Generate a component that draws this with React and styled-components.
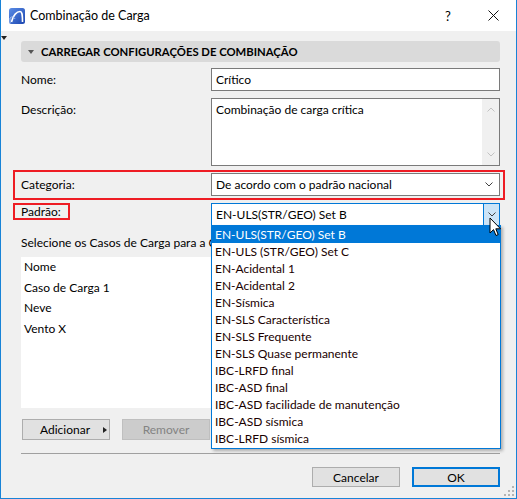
import React from 'react';
import styled, { createGlobalStyle } from 'styled-components';

const Global = createGlobalStyle`
  html, body { margin: 0; padding: 0; background: #fff; }
  body { font-family: Lato, "Noto Sans", sans-serif; font-size: 12px; color: #000; }
  * { box-sizing: border-box; }
`;

const Window = styled.div`
  position: relative;
  width: 517px;
  height: 499px;
  border: 1px solid #1883d7;
  border-top: none;
  background: #f0f0f0;
  display: flex;
  flex-direction: column;
  overflow: hidden;
`;

const TitleBar = styled.div`
  height: 31px;
  flex: none;
  background: #fff;
  display: flex;
  align-items: center;
  padding-left: 8px;
`;

const TitleText = styled.span`
  margin-left: 5px;
  font-size: 12.5px;
`;

const TitleButton = styled.div`
  width: ${(p) => p.$w}px;
  height: 31px;
  display: flex;
  align-items: center;
  justify-content: center;
  font-size: 13px;
  margin-left: ${(p) => (p.$first ? 'auto' : '0')};
`;

const Body = styled.div`
  flex: 1;
  display: flex;
  flex-direction: column;
  padding: 10px 16px 0 20px;
`;

const EdgeMarker = styled.div`
  position: absolute;
  left: 0;
  top: 36px;
  width: 0;
  height: 0;
  border-left: 3px solid transparent;
  border-right: 3px solid transparent;
  border-top: 4px solid #222;
`;

const SectionHeader = styled.div`
  height: 21px;
  background: #dadada;
  border-radius: 3px;
  display: flex;
  align-items: center;
  padding-left: 7px;
  font-weight: 700;
  font-size: 11.3px;
`;

const DownTriangle = styled.span`
  width: 0;
  height: 0;
  border-left: 3px solid transparent;
  border-right: 3px solid transparent;
  border-top: 4px solid #555;
  margin-right: 7px;
`;

const Row = styled.div`
  display: flex;
  align-items: ${(p) => (p.$top ? 'flex-start' : 'center')};
  margin-top: ${(p) => p.$mt || 0}px;
`;

const LabelCell = styled.div`
  width: 190px;
  flex: none;
  line-height: ${(p) => (p.$lh ? `${p.$lh}px` : 'normal')};
`;

const HighlightRow = styled(Row)`
  margin-left: -8px;
  margin-right: -5px;
  border: 2px solid #ee1c24;
  padding: 1px 3px 2px 6px;
`;

const HighlightLabel = styled.div`
  display: inline-block;
  margin-left: -8px;
  height: 17px;
  border: 2px solid #ee1c24;
  padding: 0 7px 0 6px;
  line-height: 14px;
`;

const TextInput = styled.div`
  flex: 1;
  height: 23px;
  background: #fff;
  border: 1px solid #7a7a7a;
  padding-left: 4px;
  display: flex;
  align-items: center;
`;

const TextArea = styled.div`
  flex: 1;
  height: 68px;
  background: #fff;
  border: 1px solid #7a7a7a;
  display: flex;
`;

const TextAreaContent = styled.div`
  flex: 1;
  padding: 3px 0 0 4px;
`;

const ScrollBar = styled.div`
  width: 17px;
  background: #f0f0f0;
  display: flex;
  flex-direction: column;
  justify-content: space-between;
  align-items: center;
  padding: 8px 0 8px;
`;

const Select = styled.div`
  flex: 1;
  height: 23px;
  background: #fff;
  border: 1px solid ${(p) => (p.$active ? '#0078d7' : '#7a7a7a')};
  padding-left: 4px;
  display: flex;
  align-items: center;
`;

const SelectText = styled.span`
  flex: 1;
`;

const PlainChevron = styled.div`
  width: 16px;
  display: flex;
  justify-content: center;
  margin-right: 2px;
`;

const DropButton = styled.div`
  width: 16px;
  align-self: stretch;
  background: #cce4f7;
  border-left: 1px solid #0078d7;
  display: flex;
  align-items: center;
  justify-content: center;
`;

const Caption = styled.div`
  margin-top: 9px;
  width: 190px;
  line-height: 16px;
  white-space: nowrap;
  overflow: hidden;
`;

const ListBox = styled.div`
  margin-top: 6px;
  height: 151px;
  background: #fff;
  padding-left: 3px;
`;

const ListItem = styled.div`
  height: 20.7px;
  line-height: 20.7px;
`;

const ButtonRow = styled.div`
  display: flex;
  gap: 12px;
  margin-top: ${(p) => p.$mt}px;
  margin-left: ${(p) => p.$ml || 0}px;
  justify-content: ${(p) => (p.$end ? 'flex-end' : 'flex-start')};
`;

const Button = styled.div`
  width: 88px;
  height: ${(p) => p.$h || 21}px;
  display: flex;
  align-items: center;
  justify-content: ${(p) => (p.$menu ? 'flex-start' : 'center')};
  padding-left: ${(p) => (p.$menu ? '17px' : '0')};
  background: ${(p) => (p.$disabled ? '#cccccc' : '#e1e1e1')};
  color: ${(p) => (p.$disabled ? '#838383' : '#000')};
  border: ${(p) => (p.$default ? '2px solid #0078d7' : `1px solid ${p.$disabled ? '#bfbfbf' : '#adadad'}`)};
`;

const RightTriangle = styled.span`
  width: 0;
  height: 0;
  margin-left: 13px;
  border-top: 3px solid transparent;
  border-bottom: 3px solid transparent;
  border-left: 4px solid #222;
`;

const Separator = styled.div`
  margin-top: 13px;
  height: 1px;
  background: #a0a0a0;
`;

const Dropdown = styled.div`
  position: absolute;
  left: 210px;
  top: 225px;
  width: 290px;
  height: 224px;
  background: #fff;
  border: 1px solid #0078d7;
  box-shadow: 2px 2px 3px rgba(0, 0, 0, 0.28);
`;

const Option = styled.div`
  height: 17px;
  line-height: 17px;
  padding-left: 3px;
  white-space: nowrap;
  background: ${(p) => (p.$selected ? '#0078d7' : 'transparent')};
  color: ${(p) => (p.$selected ? '#fff' : '#1a0000')};
`;

const Cursor = styled.svg`
  position: absolute;
  left: 488px;
  top: 217px;
`;

const Grip = styled.svg`
  position: absolute;
  right: 2px;
  bottom: 2px;
`;

const Chevron = ({ color = '#333', up }) => (
  <svg width="8" height="5" viewBox="0 0 8 5">
    <polyline
      points={up ? '0.5,4.5 4,1 7.5,4.5' : '0.5,0.5 4,4 7.5,0.5'}
      fill="none"
      stroke={color}
      strokeWidth="1"
    />
  </svg>
);

const AppIcon = () => (
  <svg width="16" height="16" viewBox="0 0 16 16">
    <defs>
      <linearGradient id="ig" x1="0" y1="0" x2="1" y2="1">
        <stop offset="0" stopColor="#5b8de6" />
        <stop offset="1" stopColor="#1c46b0" />
      </linearGradient>
    </defs>
    <rect x="0" y="0" width="16" height="16" rx="2.5" fill="url(#ig)" />
    <path d="M2.5 14 C4 7 8 3.5 11 3.5 C13 3.5 13.5 6 13.5 14" fill="none" stroke="#fff" strokeWidth="1.6" />
    <path d="M1 15 L1 10 C3 8 5 9 6 11" fill="none" stroke="#a9c4f5" strokeWidth="1" />
  </svg>
);

const options = [
  'EN-ULS(STR/GEO) Set B',
  'EN-ULS (STR/GEO) Set C',
  'EN-Acidental 1',
  'EN-Acidental 2',
  'EN-Sísmica',
  'EN-SLS Característica',
  'EN-SLS Frequente',
  'EN-SLS Quase permanente',
  'IBC-LRFD final',
  'IBC-ASD final',
  'IBC-ASD facilidade de manutenção',
  'IBC-ASD sísmica',
  'IBC-LRFD sísmica',
];

const listItems = ['Nome', 'Caso de Carga 1', 'Neve', 'Vento X'];

export default function App() {
  return (
    <>
      <Global />
      <Window>
        <TitleBar>
          <AppIcon />
          <TitleText>Combinação de Carga</TitleText>
          <TitleButton $w={46} $first>?</TitleButton>
          <TitleButton $w={45}>
            <svg width="11" height="11" viewBox="0 0 11 11">
              <path d="M0.5 0.5 L10.5 10.5 M10.5 0.5 L0.5 10.5" stroke="#111" strokeWidth="1" />
            </svg>
          </TitleButton>
        </TitleBar>
        <Body>
          <SectionHeader>
            <DownTriangle />
            CARREGAR CONFIGURAÇÕES DE COMBINAÇÃO
          </SectionHeader>

          <Row $mt={6}>
            <LabelCell>Nome:</LabelCell>
            <TextInput>Crítico</TextInput>
          </Row>

          <Row $mt={7} $top>
            <LabelCell $lh={23}>Descrição:</LabelCell>
            <TextArea>
              <TextAreaContent>Combinação de carga crítica</TextAreaContent>
              <ScrollBar>
                <Chevron up color="#c2c2c2" />
                <Chevron color="#c2c2c2" />
              </ScrollBar>
            </TextArea>
          </Row>

          <HighlightRow style={{ marginTop: 4 }}>
            <LabelCell>Categoria:</LabelCell>
            <Select>
              <SelectText>De acordo com o padrão nacional</SelectText>
              <PlainChevron>
                <Chevron color="#404040" />
              </PlainChevron>
            </Select>
          </HighlightRow>

          <Row $mt={3} $top>
            <LabelCell>
              <HighlightLabel>Padrão:</HighlightLabel>
            </LabelCell>
            <Select $active>
              <SelectText>EN-ULS(STR/GEO) Set B</SelectText>
              <DropButton>
                <Chevron color="#404040" />
              </DropButton>
            </Select>
          </Row>

          <Caption>Selecione os Casos de Carga para a Combinação:</Caption>
          <ListBox>
            {listItems.map((t) => (
              <ListItem key={t}>{t}</ListItem>
            ))}
          </ListBox>

          <ButtonRow $mt={11} $ml={1}>
            <Button $menu>
              Adicionar
              <RightTriangle />
            </Button>
            <Button $disabled>Remover</Button>
          </ButtonRow>

          <Separator />

          <ButtonRow $mt={13} $end>
            <Button $h={20}>Cancelar</Button>
            <Button $h={20} $default>OK</Button>
          </ButtonRow>
        </Body>

        <EdgeMarker />

        <Dropdown>
          {options.map((o, i) => (
            <Option key={o} $selected={i === 0}>
              {o}
            </Option>
          ))}
        </Dropdown>

        <Cursor width="13" height="21" viewBox="0 0 13 21">
          <path
            d="M1 1 L1 16 L4.5 12.6 L7 18.5 L9.2 17.6 L6.8 11.8 L11.5 11.8 Z"
            fill="#fff"
            stroke="#000"
            strokeWidth="1"
            strokeLinejoin="miter"
          />
        </Cursor>

        <Grip width="10" height="10" viewBox="0 0 10 10">
          <g fill="#b4b4b4">
            <rect x="8" y="0" width="2" height="2" />
            <rect x="4" y="4" width="2" height="2" />
            <rect x="8" y="4" width="2" height="2" />
            <rect x="0" y="8" width="2" height="2" />
            <rect x="4" y="8" width="2" height="2" />
            <rect x="8" y="8" width="2" height="2" />
          </g>
        </Grip>
      </Window>
    </>
  );
}
